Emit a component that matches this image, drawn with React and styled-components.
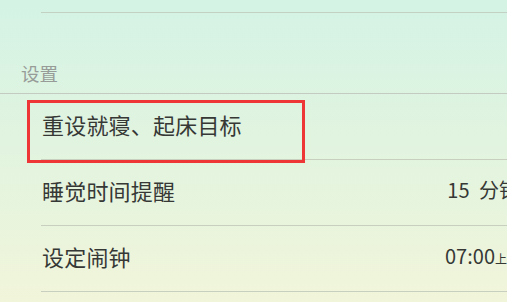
import styled, { createGlobalStyle } from "styled-components"

const GlobalStyle = createGlobalStyle`
  html, body {
    margin: 0;
    padding: 0;
  }

  body {
    font-family: "Noto Sans CJK SC", "Noto Sans", sans-serif;
    background: #e2f4df;
  }
`

const settings = [
  { id: "reset", label: "重设就寝、起床目标", highlight: true },
  { id: "remind", label: "睡觉时间提醒", value: "15 分钟" },
  { id: "alarm", label: "设定闹钟", value: "07:00", suffix: "上午" }
]

function App() {
  return (
    <>
      <GlobalStyle />
      <Page>
        <Content>
          <TopRow />
          <SectionHeader>设置</SectionHeader>
          <List>
            {settings.map((item) => (
              <Row key={item.id}>
                <Label>{item.label}</Label>
                {item.value && (
                  <Value>
                    {item.value}
                    {item.suffix && <Suffix>{item.suffix}</Suffix>}
                  </Value>
                )}
                {item.highlight && <Highlight />}
              </Row>
            ))}
          </List>
        </Content>
      </Page>
    </>
  )
}

const Page = styled.div`
  width: 507px;
  height: 302px;
  overflow: hidden;
  background: linear-gradient(180deg, #d4f3e5 0%, #e2f4df 50%, #f1f5da 100%);
`

const Content = styled.div`
  width: 580px;
`

const TopRow = styled.div`
  height: 12px;
  margin-left: 41px;
  border-bottom: 1px solid #c3d0c4;
`

const SectionHeader = styled.div`
  height: 81px;
  box-sizing: border-box;
  padding: 0 0 8px 21px;
  display: flex;
  align-items: flex-end;
  font-size: 18.5px;
  line-height: 24px;
  color: #979c98;
  border-bottom: 1px solid #c3cbc0;
`

const List = styled.div`
  display: flex;
  flex-direction: column;
`

const Row = styled.div`
  position: relative;
  height: 66px;
  box-sizing: border-box;
  margin-left: 41px;
  padding: 0 61px 6px 1px;
  display: flex;
  align-items: center;
  justify-content: space-between;
  border-bottom: 1px solid #c8cfbf;
`

const Label = styled.span`
  font-size: 22px;
  color: #363836;
  letter-spacing: 0.2px;
`

const Value = styled.span`
  font-size: 20px;
  color: #363836;
  word-spacing: 5px;
`

const Suffix = styled.span`
  font-size: 12px;
`

const Highlight = styled.div`
  position: absolute;
  left: -14px;
  top: 6px;
  width: 278px;
  height: 63px;
  box-sizing: border-box;
  border: 3px solid #ee3636;
  pointer-events: none;
`

export default App
